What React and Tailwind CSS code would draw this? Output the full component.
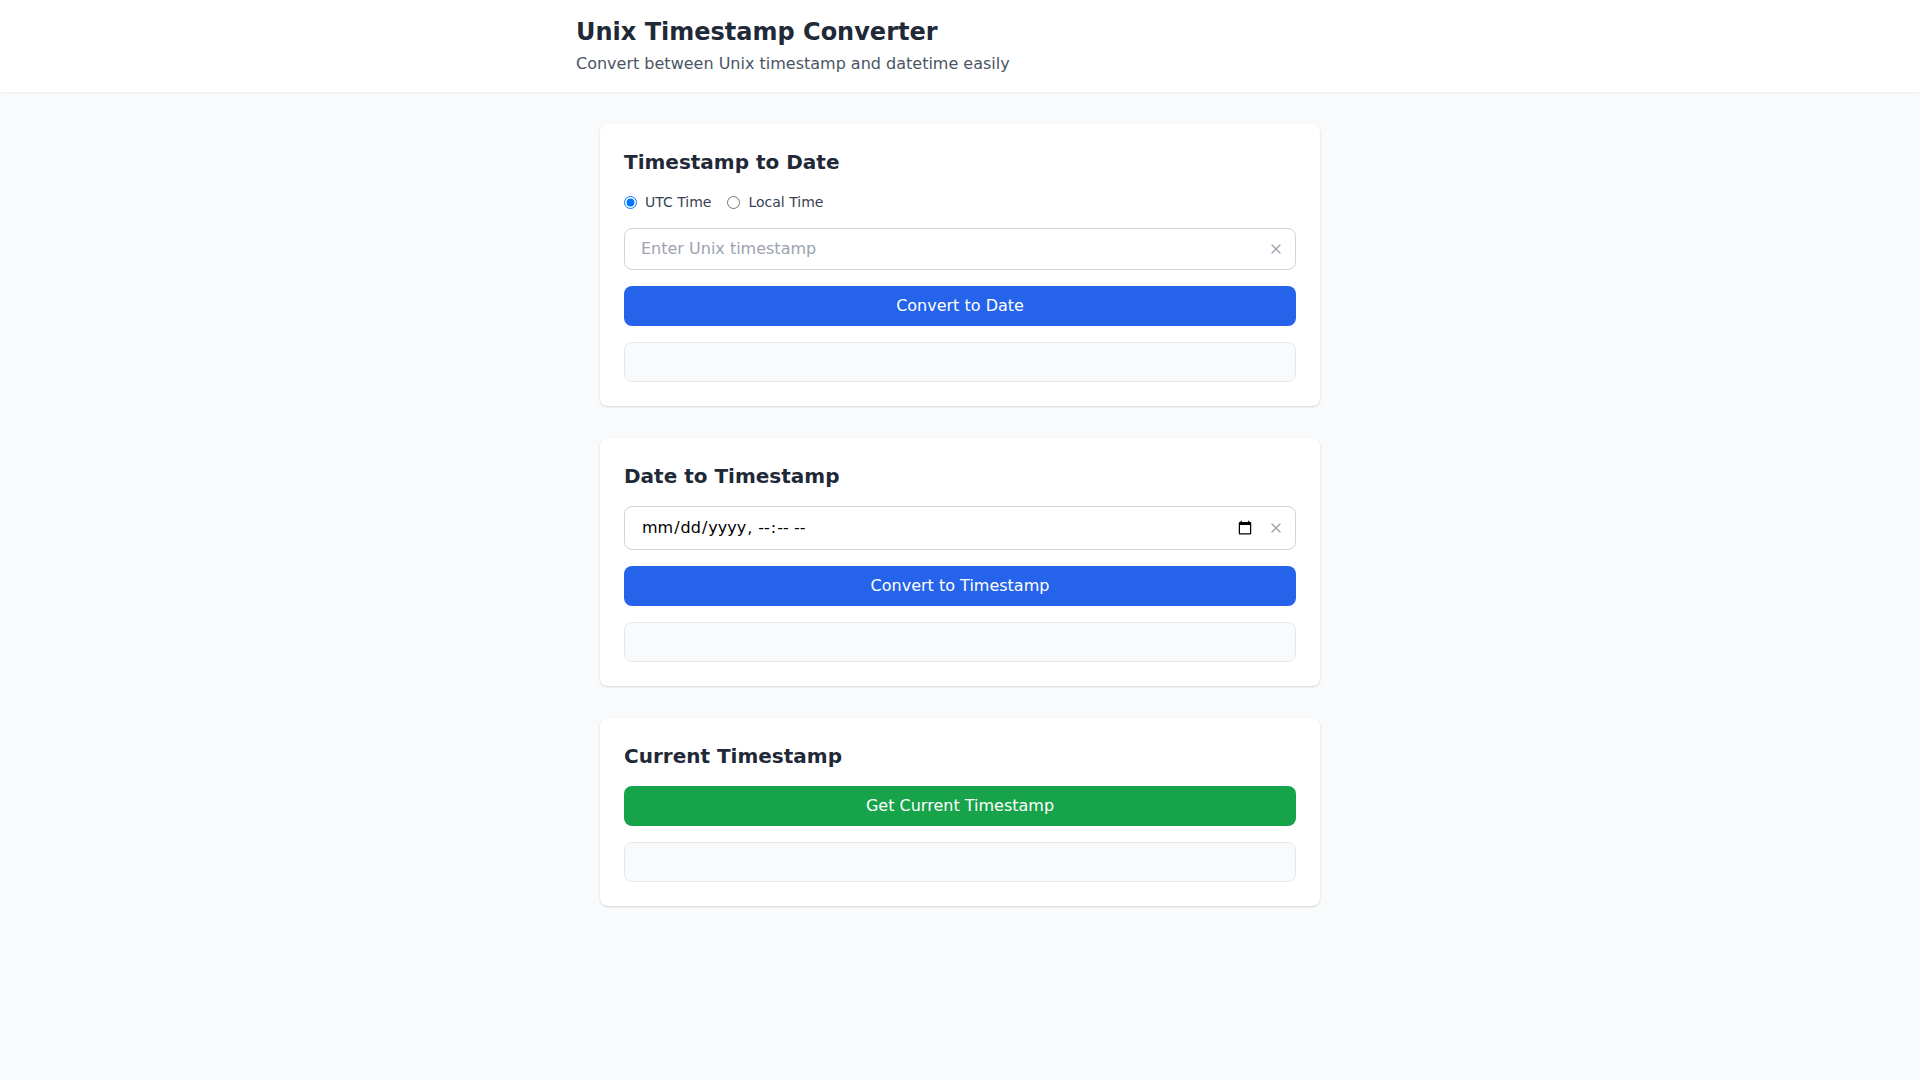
import React, { useState } from 'react'
import { X } from 'lucide-react'

function ClearButton({ onClick }) {
  return (
    <button
      type="button"
      onClick={onClick}
      className="absolute right-3 top-1/2 -translate-y-1/2 text-[#9ca3af] hover:text-[#4b5563]"
    >
      <X size={16} strokeWidth={2} />
    </button>
  )
}

function Result({ value }) {
  return (
    <div className="h-10 px-4 flex items-center bg-[#f9fafb] border border-[#e5e7eb] rounded-lg text-[#1f2937] text-base">
      {value}
    </div>
  )
}

export default function App() {
  const [mode, setMode] = useState('utc')
  const [ts, setTs] = useState('')
  const [dateResult, setDateResult] = useState('')
  const [dt, setDt] = useState('')
  const [tsResult, setTsResult] = useState('')
  const [now, setNow] = useState('')

  const toDate = () => {
    const n = Number(ts)
    if (!ts || isNaN(n)) { setDateResult('Invalid timestamp'); return }
    const d = new Date(n < 1e12 ? n * 1000 : n)
    setDateResult(mode === 'utc' ? d.toUTCString() : d.toString())
  }

  const toTimestamp = () => {
    if (!dt) { setTsResult('Invalid date'); return }
    setTsResult(String(Math.floor(new Date(dt).getTime() / 1000)))
  }

  return (
    <div className="min-h-screen bg-[#f9fafb] font-['DejaVu_Sans',sans-serif]">
      <header className="bg-white shadow-[0_1px_2px_rgba(0,0,0,0.05)]">
        <div className="max-w-3xl mx-auto py-4">
          <h1 className="text-2xl font-bold text-[#1f2937]">Unix Timestamp Converter</h1>
          <p className="mt-1 text-base text-[#4b5563]">Convert between Unix timestamp and datetime easily</p>
        </div>
      </header>

      <main className="max-w-3xl mx-auto px-6 py-8 space-y-8">
        <section className="bg-white rounded-lg shadow-[0_1px_3px_rgba(0,0,0,0.1),0_1px_2px_rgba(0,0,0,0.06)] p-6">
          <h2 className="text-xl font-semibold text-[#1f2937] mb-4">Timestamp to Date</h2>
          <div className="flex items-center gap-4 mb-4 text-sm text-[#374151]">
            <label className="flex items-center">
              <input type="radio" name="tz" className="mr-2" checked={mode === 'utc'} onChange={() => setMode('utc')} />
              UTC Time
            </label>
            <label className="flex items-center">
              <input type="radio" name="tz" className="mr-2" checked={mode === 'local'} onChange={() => setMode('local')} />
              Local Time
            </label>
          </div>
          <div className="relative mb-4">
            <input
              type="text"
              value={ts}
              onChange={e => setTs(e.target.value)}
              placeholder="Enter Unix timestamp"
              className="w-full px-4 py-2 pr-10 text-base border border-[#d1d5db] rounded-lg placeholder-[#9ca3af] focus:outline-none focus:ring-2 focus:ring-[#3b82f6]"
            />
            <ClearButton onClick={() => setTs('')} />
          </div>
          <button onClick={toDate} className="w-full py-2 mb-4 text-base text-white bg-[#2563eb] rounded-lg hover:bg-[#1d4ed8]">
            Convert to Date
          </button>
          <Result value={dateResult} />
        </section>

        <section className="bg-white rounded-lg shadow-[0_1px_3px_rgba(0,0,0,0.1),0_1px_2px_rgba(0,0,0,0.06)] p-6">
          <h2 className="text-xl font-semibold text-[#1f2937] mb-4">Date to Timestamp</h2>
          <div className="relative mb-4">
            <input
              type="datetime-local"
              value={dt}
              onChange={e => setDt(e.target.value)}
              className="w-full h-11 px-4 pr-10 text-base text-black border border-[#d1d5db] rounded-lg focus:outline-none focus:ring-2 focus:ring-[#3b82f6]"
            />
            <ClearButton onClick={() => setDt('')} />
          </div>
          <button onClick={toTimestamp} className="w-full py-2 mb-4 text-base text-white bg-[#2563eb] rounded-lg hover:bg-[#1d4ed8]">
            Convert to Timestamp
          </button>
          <Result value={tsResult} />
        </section>

        <section className="bg-white rounded-lg shadow-[0_1px_3px_rgba(0,0,0,0.1),0_1px_2px_rgba(0,0,0,0.06)] p-6">
          <h2 className="text-xl font-semibold text-[#1f2937] mb-4">Current Timestamp</h2>
          <button
            onClick={() => setNow(String(Math.floor(Date.now() / 1000)))}
            className="w-full py-2 mb-4 text-base text-white bg-[#16a34a] rounded-lg hover:bg-[#15803d]"
          >
            Get Current Timestamp
          </button>
          <Result value={now} />
        </section>
      </main>
    </div>
  )
}
